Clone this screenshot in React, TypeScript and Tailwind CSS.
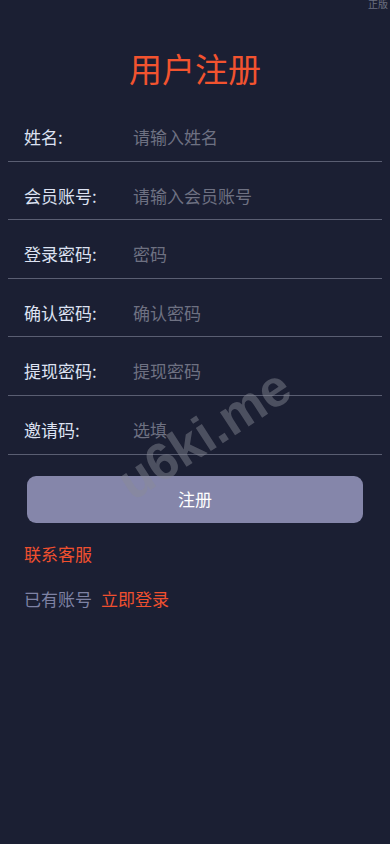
import React from "react";

const rows = [
  { label: "姓名:", ph: "请输入姓名" },
  { label: "会员账号:", ph: "请输入会员账号" },
  { label: "登录密码:", ph: "密码" },
  { label: "确认密码:", ph: "确认密码" },
  { label: "提现密码:", ph: "提现密码" },
  { label: "邀请码:", ph: "选填" },
];

export default function App() {
  return (
    <div
      className="relative w-[390px] h-[844px] overflow-hidden bg-[#1b1f33]"
      style={{ fontFamily: '"Microsoft YaHei", "Noto Sans CJK SC", "Noto Sans", sans-serif' }}
    >
      <div className="absolute right-[2px] top-[-3px] text-[10px] leading-[14px] text-[#6b6f80]">正版</div>
      <div className="h-[103px] flex justify-center pt-[47px]">
        <h1 className="text-[33px] leading-[42px] text-[#f2532f] font-normal">用户注册</h1>
      </div>
      <div className="px-[8px]">
        {rows.map((r) => (
          <div
            key={r.label}
            className="flex items-center pt-[22px] pb-[11.6px] border-b border-[#5a5e72] h-[58.6px]"
          >
            <div className="w-[125px] pl-[16px] text-[17px] leading-[24px] text-[#dde2f2]">{r.label}</div>
            <div className="text-[17px] leading-[24px] text-[#6e7182]">{r.ph}</div>
          </div>
        ))}
      </div>
      <div className="px-[27px] pt-[21px]">
        <button className="w-full h-[47px] rounded-[9px] bg-[#8586aa] text-white text-[17px] flex items-center justify-center">
          注册
        </button>
      </div>
      <div className="pl-[24px] pt-[19px] text-[17px] leading-[24px] text-[#f0502f]">联系客服</div>
      <div className="pl-[24px] pt-[21px] flex items-center text-[17px] leading-[24px]">
        <span className="text-[#7e82a4]">已有账号</span>
        <span className="ml-[9px] text-[#f0502f]">立即登录</span>
      </div>
      <div
        className="absolute left-[204px] top-[434px] -translate-x-1/2 -translate-y-1/2 -rotate-[33deg] text-[52px] font-bold text-[#8a8c96]/45 whitespace-nowrap pointer-events-none"
        style={{ fontFamily: '"Liberation Sans", Arial, sans-serif' }}
      >
        u6ki.me
      </div>
    </div>
  );
}
